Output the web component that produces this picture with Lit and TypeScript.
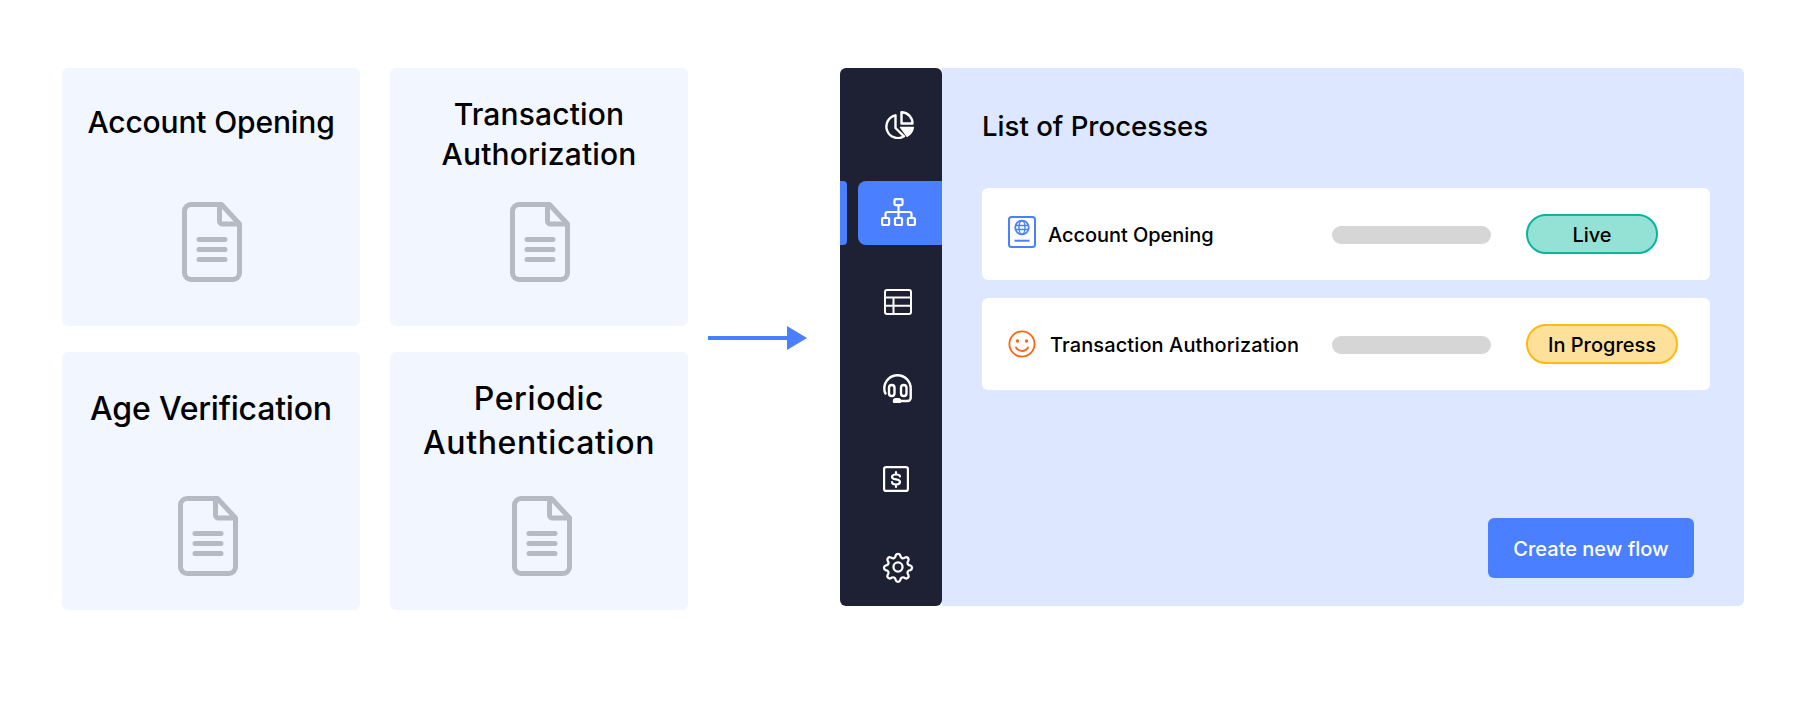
import { LitElement, html, css, svg } from "lit";
import { customElement } from "lit/decorators.js";

const doc = html`<svg class="doc" viewBox="0 0 60 80" width="60" height="80" fill="none" stroke="#b6bac4" stroke-width="5" stroke-linejoin="round" stroke-linecap="round">
  <path d="M9 2.5H39.5L57.5 22V71a6.5 6.5 0 0 1-6.5 6.5H9A6.5 6.5 0 0 1 2.5 71V9A6.5 6.5 0 0 1 9 2.5Z"/>
  <path d="M37.5 3V19a3 3 0 0 0 3 3H57"/>
  <path d="M17 37.5H43M17 47.5H43M17 57.5H43"/>
</svg>`;

const cards = [
  { title: ["Account Opening"], top: 34, dx: 1, big: false, ls: -0.15 },
  { title: ["Transaction", "Authorization"], top: 26, dx: 1, big: false, ls: 0.15 },
  { title: ["Age Verification"], top: 35, dx: -3, big: true, ls: -0.2 },
  { title: ["Periodic", "Authentication"], top: 25, dx: 3, big: true, ls: 0.6 },
];

const navIcons = [
  { dy: 0, icon: svg`<svg width="31" height="28" viewBox="0 0 31 28" fill="none" stroke="#fff" stroke-width="2.4" stroke-linejoin="round" stroke-linecap="round"><path d="M12.500 4.300A11.500 11.500 0 1 0 21 25.300L12.500 17Z"/><path d="M18.500 1.300A11 11 0 0 1 29.500 12.500H18.500Z"/><path d="M17.500 16.300H30.500A13 13 0 0 1 24 25.500Z" fill="#fff" stroke-width="1.200"/></svg>` },
  { dy: 0, icon: svg`<svg width="35" height="28" viewBox="0 0 35 28" fill="none" stroke="#fff" stroke-width="2.200" stroke-linejoin="round" stroke-linecap="round"><rect x="13.500" y="1.100" width="8" height="6" rx="1"/><path d="M17.500 7V20M4.500 20V16a2 2 0 0 1 2-2H28.500a2 2 0 0 1 2 2V20"/><rect x="1.100" y="20" width="7" height="7" rx="1"/><rect x="14" y="20" width="7" height="7" rx="1"/><rect x="26.900" y="20" width="7" height="7" rx="1"/></svg>` },
  { dy: 0, icon: svg`<svg width="28" height="26" viewBox="0 0 28 26" fill="none" stroke="#fff" stroke-width="2"><rect x="1" y="1" width="26" height="24" rx="2"/><path d="M1 8.500H27M1 16.800H27M9.500 8.500V25"/></svg>` },
  { dy: -2, icon: svg`<svg width="30" height="29" viewBox="0 0 30 29" fill="none" stroke="#fff" stroke-width="2.400" stroke-linecap="round" stroke-linejoin="round"><path d="M2.500 19.500C1.500 18 1.300 16.500 1.300 14.500A13.200 13.200 0 0 1 27.700 14.500V24a3 3 0 0 1-3 3H15"/><rect x="6" y="11" width="5.500" height="11" rx="2.700"/><rect x="18" y="11" width="5.500" height="11" rx="2.700"/><rect x="11" y="25.300" width="6" height="3.400" rx="1.700" fill="#fff"/></svg>` },
  { dy: 0, icon: svg`<svg class="shift" width="26" height="26" viewBox="0 0 26 26" fill="none" stroke="#fff" stroke-width="2.200" stroke-linecap="round"><rect x="1.100" y="1.100" width="23.800" height="23.800" rx="2"/><path d="M17 10.500C17 9 15.500 8.500 13 8.500 10.500 8.500 9 9.500 9 11 9 12.500 10.500 13 13 13.300 15.500 13.600 17 14.500 17 16 17 17.500 15.500 18.500 13 18.500 10.500 18.500 9 17.500 9 16M13 6V8.500M13 18.500V21"/></svg>` },
  { dy: -1, icon: svg`<svg width="32" height="32" viewBox="0 0 24 24" fill="none" stroke="#fff" stroke-width="1.700" stroke-linecap="round" stroke-linejoin="round"><circle cx="12" cy="12" r="3.400"/><path d="M10.300 3.300a1.800 1.800 0 0 1 3.400 0l.3 1a1.800 1.800 0 0 0 2.500 1l.9-.5a1.800 1.800 0 0 1 2.400 2.400l-.5.9a1.800 1.800 0 0 0 1 2.500l1 .3a1.800 1.800 0 0 1 0 3.400l-1 .3a1.800 1.800 0 0 0-1 2.500l.5.9a1.800 1.800 0 0 1-2.400 2.400l-.9-.5a1.800 1.800 0 0 0-2.500 1l-.3 1a1.800 1.800 0 0 1-3.400 0l-.3-1a1.800 1.800 0 0 0-2.500-1l-.9.5a1.800 1.800 0 0 1-2.400-2.400l.5-.9a1.800 1.800 0 0 0-1-2.500l-1-.3a1.800 1.800 0 0 1 0-3.400l1-.3a1.800 1.800 0 0 0 1-2.500l-.5-.9a1.800 1.800 0 0 1 2.400-2.400l.9.5a1.800 1.800 0 0 0 2.500-1Z"/></svg>` },
];

const passport = html`<svg class="pp" width="28" height="32" viewBox="0 0 28 32" fill="none" stroke="#4a80ff" stroke-width="2"><rect x="1" y="1" width="26" height="30" rx="2.500"/><circle cx="14" cy="11.500" r="6.800" stroke-width="1.800"/><ellipse cx="14" cy="11.500" rx="3" ry="6.800" stroke-width="1.400"/><path d="M7.200 9.500H20.800M7.200 13.500H20.800" stroke-width="1.400"/><path d="M6.500 24.700H21.500"/></svg>`;
const smile = html`<svg width="28" height="28" viewBox="0 0 28 28" fill="none" stroke="#fb6514" stroke-width="1.800" stroke-linecap="round"><circle cx="14" cy="14" r="12.600"/><circle cx="9.500" cy="11" r=".8" fill="#fb6514"/><circle cx="18.500" cy="11" r=".8" fill="#fb6514"/><path d="M8 17.500C9.500 20 11.500 21 14 21S18.500 20 20 17.500"/></svg>`;

const rows = [
  { icon: passport, name: "Account Opening", gap: 12, ls: -0.05, status: "Live", cls: "live" },
  { icon: smile, name: "Transaction Authorization", gap: 14, ls: 0.1, status: "In Progress", cls: "prog" },
];

@customElement("app-root")
export class AppRoot extends LitElement {
  static styles = css`
    :host { display: block; width: 1804px; height: 720px; background: #fff; font-family: Inter, "Liberation Sans", sans-serif; color: #000; overflow: hidden; }
    .page { display: flex; padding: 68px 60px 0 62px; align-items: flex-start; }
    .grid { display: grid; grid-template-columns: 298px 298px; grid-auto-rows: 258px; column-gap: 30px; row-gap: 26px; }
    .card { background: #f1f6ff; border-radius: 6px; display: flex; flex-direction: column; align-items: center; box-sizing: border-box; padding-bottom: 44px; }
    .card.big { padding-bottom: 34px; }
    .title { text-align: center; font-size: 30px; line-height: 40px; font-weight: 500; }
    .card.big .title { font-size: 32px; line-height: 44px; }
    .doc { margin-top: auto; display: block; }
    .arrow { width: 132px; padding: 258px 0 0 20px; }
    .arrow svg { display: block; }
    .app { display: flex; width: 904px; height: 538px; }
    .side { width: 102px; height: 538px; box-sizing: border-box; padding-top: 13px; background: #1e2133; border-radius: 6px; display: grid; grid-template-rows: 88px 89px 88px 89px 88px 89px; position: relative; z-index: 1; }
    .nav { display: flex; align-items: center; justify-content: center; padding-left: 14px; }
    .nav .shift { margin-left: -4px; }
    .nav.on { padding: 0; margin: 12px 0 13px; display: grid; grid-template-columns: 7px 84px; justify-content: space-between; }
    .tab { height: 64px; background: #4a80ff; border-radius: 0 4px 4px 0; }
    .pill { height: 64px; box-sizing: border-box; background: #4a80ff; border-radius: 8px 0 0 8px; display: flex; align-items: center; justify-content: center; padding: 0 3px 2px 0; }
    .panel { flex: 1; background: #dde7ff; border-radius: 0 6px 6px 0; padding: 40px 34px 28px 40px; display: flex; flex-direction: column; }
    .panel h2 { margin: 0 0 44px; font-size: 27.600px; line-height: 36px; font-weight: 500; }
    .rows { display: flex; flex-direction: column; gap: 18px; }
    .row { height: 92px; background: #fff; border-radius: 6px; display: grid; grid-template-columns: 324px 194px auto; align-items: center; padding-left: 26px; }
    .who { display: flex; align-items: center; font-size: 20px; font-weight: 500; }
    .who span { padding-top: 2px; }
    .pp { margin-top: -4px; }
    .bar { width: 159px; height: 18px; margin-top: 2px; border-radius: 9px; background: #d6d6d6; }
    .badge { justify-self: start; height: 40px; box-sizing: border-box; padding-top: 1px; border-radius: 20px; border: 2px solid; display: flex; align-items: center; justify-content: center; font-size: 20px; font-weight: 500; }
    .live { width: 132px; background: #94e2d5; border-color: #0db39e; }
    .prog { width: 152px; background: #fde09a; border-color: #fdb913; }
    .btn { margin-top: auto; align-self: flex-end; margin-right: 16px; width: 206px; height: 60px; padding: 2px 0 0; border: 0; border-radius: 6px; background: #4a80ff; color: #fff; font: 500 20px Inter, "Liberation Sans", sans-serif; }
  `;

  render() {
    return html`<div class="page">
      <div class="grid">
        ${cards.map(c => html`<div class="card ${c.big ? "big" : ""}">
          <div class="title" style="padding-top:${c.top}px;letter-spacing:${c.ls}px">${c.title.map(t => html`<div>${t}</div>`)}</div>
          <div class="doc" style="transform:translateX(${c.dx}px)">${doc}</div>
        </div>`)}
      </div>
      <div class="arrow">
        <svg width="99" height="24" viewBox="0 0 99 24"><rect x="0" y="10" width="80" height="4" fill="#4a80ff"/><path d="M79 0L99 12L79 24Z" fill="#4a80ff"/></svg>
      </div>
      <div class="app">
        <div class="side">
          ${navIcons.map((n, i) => i === 1
            ? html`<div class="nav on"><div class="tab"></div><div class="pill">${n.icon}</div></div>`
            : html`<div class="nav" style="transform:translateY(${n.dy}px)">${n.icon}</div>`)}
        </div>
        <div class="panel">
          <h2>List of Processes</h2>
          <div class="rows">
            ${rows.map(r => html`<div class="row">
              <div class="who">${r.icon}<span style="margin-left:${r.gap}px;letter-spacing:${r.ls}px">${r.name}</span></div>
              <div class="bar"></div>
              <div class="badge ${r.cls}">${r.status}</div>
            </div>`)}
          </div>
          <button class="btn">Create new flow</button>
        </div>
      </div>
    </div>`;
  }
}
